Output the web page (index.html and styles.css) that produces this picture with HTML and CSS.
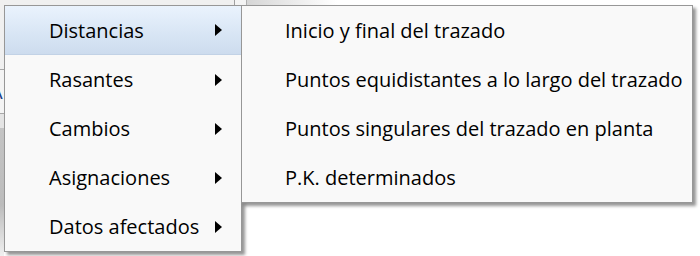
FILE: index.html
```html
<!DOCTYPE html>
<html lang="es">
<head>
  <meta charset="UTF-8" />
  <title>Menú contextual</title>
  <link rel="stylesheet" href="styles.css">
</head>
<body>
  <div class="backdrop">
    <div class="topbar">
      <div class="tb-left"></div>
      <div class="tb-sep"></div>
      <div class="tb-btn"></div>
      <div class="tb-fade"></div>
    </div>
    <div class="side">
      <div class="side-a"></div>
      <div class="side-b"><span>A</span></div>
      <div class="side-c"></div>
      <div class="side-d"></div>
    </div>
  </div>

  <ul class="menu main-menu">
    <li class="item active">Distancias <span class="arrow"></span></li>
    <li class="item">Rasantes <span class="arrow"></span></li>
    <li class="item">Cambios <span class="arrow"></span></li>
    <li class="item">Asignaciones <span class="arrow"></span></li>
    <li class="item">Datos afectados <span class="arrow"></span></li>
  </ul>

  <ul class="menu sub-menu">
    <li class="item">Inicio y final del trazado</li>
    <li class="item">Puntos equidistantes a lo largo del trazado</li>
    <li class="item">Puntos singulares del trazado en planta</li>
    <li class="item">P.K. determinados</li>
  </ul>
</body>
</html>
```

FILE: styles.css
```css
body {
  margin: 0;
  width: 700px;
  height: 256px;
  overflow: hidden;
  background: #fff;
  font-family: "Open Sans", "Noto Sans", sans-serif;
  position: relative;
}

.backdrop {
  display: flex;
  flex-direction: column;
  height: 256px;
}

.topbar {
  display: flex;
  height: 5px;
  background: #fff;
}

.tb-left {
  width: 234px;
  background: #f0f0f0;
}

.tb-sep {
  width: 1px;
  background: #a0a0a0;
}

.tb-btn {
  width: 11px;
  background: #f4f4f4;
  border-right: 1px solid #b0b0b0;
}

.tb-fade {
  width: 90px;
  background: linear-gradient(to right, #d6d6d6, #fff);
}

.side {
  display: flex;
  flex-direction: column;
  width: 4px;
  flex: 1;
}

.side-a {
  height: 64px;
  background: #f0f0f0;
  border-bottom: 1px solid #a8a8a8;
}

.side-b {
  height: 43px;
  background: #f4f4f4;
  border-bottom: 1px solid #a8a8a8;
  overflow: hidden;
  font-size: 20px;
  line-height: 43px;
  color: #1a3f8a;
}

.side-b span {
  margin-left: -10px;
}

.side-c {
  height: 14px;
  background: #e4e4e4;
}

.side-d {
  flex: 1;
  background: linear-gradient(#c4c4c4, #bcbcbc 60%, #f0f0f0);
}

.menu {
  position: absolute;
  top: 5px;
  margin: 0;
  padding: 0;
  list-style: none;
  background: #f9f9f9;
  border: 1px solid #979797;
  box-shadow: 3px 3px 3px rgba(0,0,0,0.42);
}

.main-menu {
  left: 4px;
  width: 236px;
}

.sub-menu {
  left: 241px;
  width: 450px;
}

.item {
  display: flex;
  align-items: center;
  height: 49px;
  padding-left: 44px;
  font-size: 20px;
  color: #000;
  position: relative;
}

.sub-menu .item {
  padding-left: 43px;
}

.item.active {
  background: linear-gradient(#eaf3fd, #d9e6f5 55%, #cddcee);
  border-bottom: 1px solid #c2d2e6;
  height: 48px;
}

.arrow {
  position: absolute;
  left: 210px;
  top: 50%;
  margin-top: -6px;
  width: 0;
  height: 0;
  border-left: 7px solid #000;
  border-top: 6px solid transparent;
  border-bottom: 6px solid transparent;
}
```
